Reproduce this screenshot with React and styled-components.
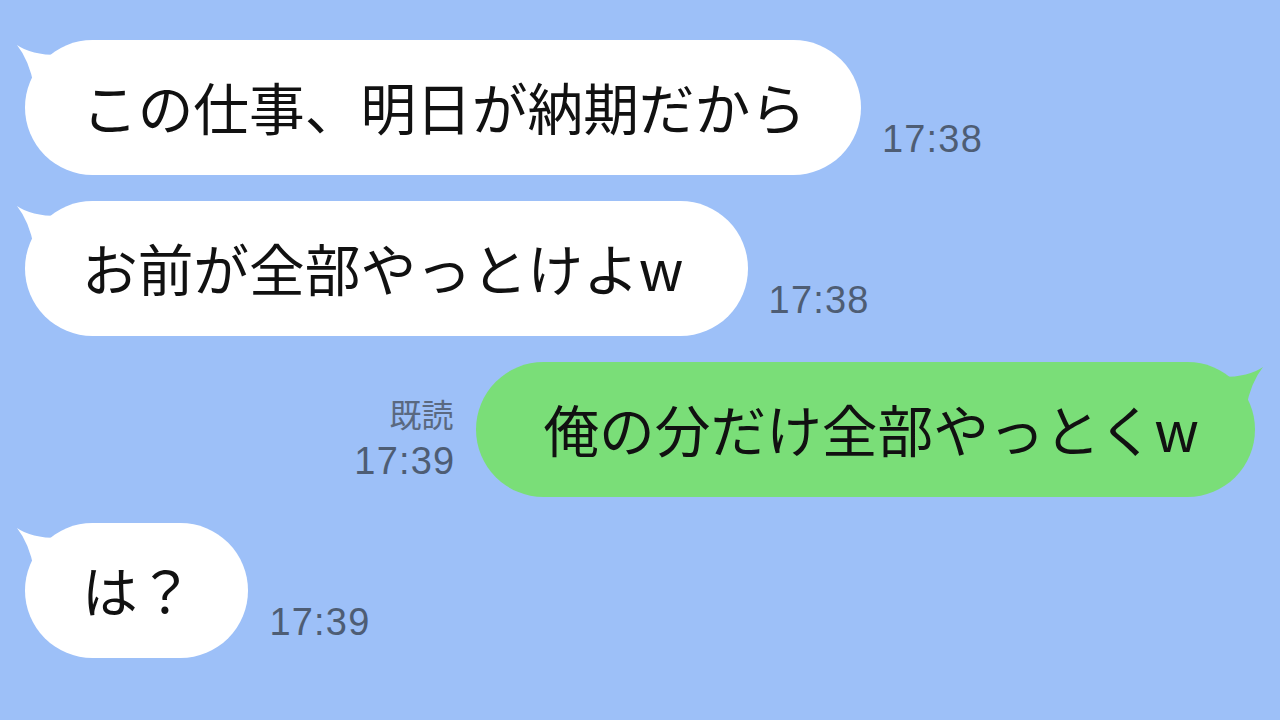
import React from 'react';
import styled, { createGlobalStyle } from 'styled-components';

const GlobalStyle = createGlobalStyle`
  html, body {
    margin: 0;
    padding: 0;
    background: #9dc0f8;
  }
  body {
    font-family: "Noto Sans CJK JP", "Noto Sans", sans-serif;
  }
`;

const messages = [
  { id: 1, side: 'left', text: 'この仕事、明日が納期だから', time: '17:38' },
  { id: 2, side: 'left', text: 'お前が全部やっとけよw', time: '17:38', wide: true },
  { id: 3, side: 'right', text: '俺の分だけ全部やっとくw', time: '17:39', read: true },
  { id: 4, side: 'left', text: 'は？', time: '17:39' },
];

const Tail = ({ side, color }) => (
  <TailSvg side={side} width="50" height="50" viewBox="0 0 50 50">
    <path d="M1,5 Q15,15 42,15 L42,46 L18,46 Q13,20 1,5 Z" fill={color} />
  </TailSvg>
);

export default function App() {
  return (
    <>
      <GlobalStyle />
      <Chat>
        {messages.map(m => (
          <Row key={m.id} side={m.side}>
            {m.side === 'right' && (
              <Meta side="right">
                {m.read && <Read>既読</Read>}
                <Time>{m.time}</Time>
              </Meta>
            )}
            <Bubble side={m.side} wide={m.wide}>
              <Tail side={m.side} color={m.side === 'right' ? '#7ade78' : '#ffffff'} />
              <Text>{m.text}</Text>
            </Bubble>
            {m.side === 'left' && (
              <Meta side="left">
                <Time>{m.time}</Time>
              </Meta>
            )}
          </Row>
        ))}
      </Chat>
    </>
  );
}

const Chat = styled.div`
  width: 1280px;
  height: 720px;
  box-sizing: border-box;
  padding: 40px 25px 0 25px;
  display: flex;
  flex-direction: column;
  gap: 26px;
  overflow: hidden;
`;

const Row = styled.div`
  display: flex;
  flex-direction: row;
  align-items: flex-end;
  justify-content: ${p => (p.side === 'right' ? 'flex-end' : 'flex-start')};
  gap: 21px;
`;

const Bubble = styled.div`
  position: relative;
  height: 135px;
  border-radius: 68px;
  display: flex;
  align-items: center;
  box-sizing: border-box;
  padding: ${p => (p.side === 'right' ? '0 56px 0 67px' : p.wide ? '0 64px 0 57px' : '0 55px 0 57px')};
  background: ${p => (p.side === 'right' ? '#7ade78' : '#ffffff')};
`;

const TailSvg = styled.svg`
  position: absolute;
  top: 0;
  ${p => (p.side === 'right' ? 'right: -9px; transform: scaleX(-1);' : 'left: -9px;')}
`;

const Text = styled.span`
  position: relative;
  font-size: 55.7px;
  line-height: 1;
  color: #111111;
  white-space: nowrap;
  margin-top: -4px;
`;

const Meta = styled.div`
  display: flex;
  flex-direction: column;
  align-items: ${p => (p.side === 'right' ? 'flex-end' : 'flex-start')};
  margin-bottom: 17px;
  font-family: "Liberation Sans", "Noto Sans CJK JP", sans-serif;
  color: #4e5d74;
`;

const Read = styled.span`
  font-family: "Noto Sans CJK JP", sans-serif;
  font-size: 32px;
  line-height: 1;
  color: #5a6980;
  margin-bottom: 13px;
  margin-right: 2px;
`;

const Time = styled.span`
  font-size: 38px;
  line-height: 1;
  letter-spacing: 1.2px;
`;
